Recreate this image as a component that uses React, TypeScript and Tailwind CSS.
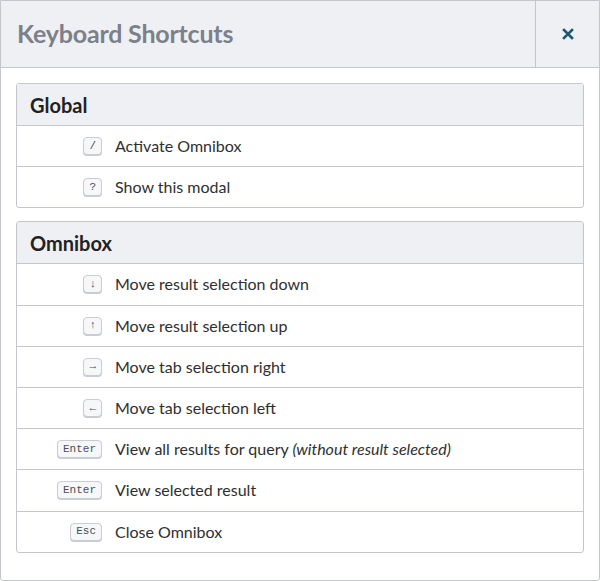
import React from 'react';

type Shortcut = { keys: string; label: React.ReactNode };

const sections: { title: string; items: Shortcut[] }[] = [
  {
    title: 'Global',
    items: [
      { keys: '/', label: 'Activate Omnibox' },
      { keys: '?', label: 'Show this modal' },
    ],
  },
  {
    title: 'Omnibox',
    items: [
      { keys: '↓', label: 'Move result selection down' },
      { keys: '↑', label: 'Move result selection up' },
      { keys: '→', label: 'Move tab selection right' },
      { keys: '←', label: 'Move tab selection left' },
      {
        keys: 'Enter',
        label: (
          <>
            View all results for query <em>(without result selected)</em>
          </>
        ),
      },
      { keys: 'Enter', label: 'View selected result' },
      { keys: 'Esc', label: 'Close Omnibox' },
    ],
  },
];

const Kbd = ({ children }: { children: string }) => (
  <kbd className="inline-flex h-[18px] min-w-[18px] items-center justify-center rounded-[4px] border border-[#c9ccd3] bg-[#f6f7f9] px-[5px] font-['Liberation_Mono',monospace] text-[11px] leading-none text-[#4a4f58] shadow-[0_1px_0_#c9ccd3]">
    {children}
  </kbd>
);

export default function App() {
  return (
    <div className="h-[581px] w-[600px] bg-white font-['Lato',sans-serif]">
      <div className="h-[581px] w-[600px] overflow-hidden rounded-b-[3px] border border-[#c4c6cb] bg-white">
        <div className="flex h-[67px] items-stretch border-b border-[#c4c6cb] bg-[#eff0f4]">
          <h2 className="flex flex-1 items-center pb-[1px] pl-[16px] text-[25px] font-bold tracking-[-0.2px] text-[#7b8089]">
            Keyboard Shortcuts
          </h2>
          <button className="flex w-[64px] items-center justify-center border-l border-[#c4c6cb] pb-[1px] text-[#1c5a72]">
            <svg width="12" height="12" viewBox="0 0 12 12" fill="none" stroke="currentColor" strokeWidth="2.6" strokeLinecap="square">
              <path d="M2 2L10 10M10 2L2 10" />
            </svg>
          </button>
        </div>
        <div className="flex flex-col gap-[13px] px-[15px] pt-[15px]">
          {sections.map((section) => (
            <div key={section.title} className="overflow-hidden rounded-[3px] border border-[#c4c6cb]">
              <div className="flex h-[41px] items-center bg-[#eff0f4] pl-[13px] text-[20px] font-bold text-[#222]">
                {section.title}
              </div>
              {section.items.map((item, i) => (
                <div key={i} className="flex h-[41.2px] items-center border-t border-[#c4c6cb] text-[16px] text-[#2f2f2f]">
                  <div className="flex w-[85px] justify-end">
                    <Kbd>{item.keys}</Kbd>
                  </div>
                  <div className="pl-[13px]">{item.label}</div>
                </div>
              ))}
            </div>
          ))}
        </div>
      </div>
    </div>
  );
}
